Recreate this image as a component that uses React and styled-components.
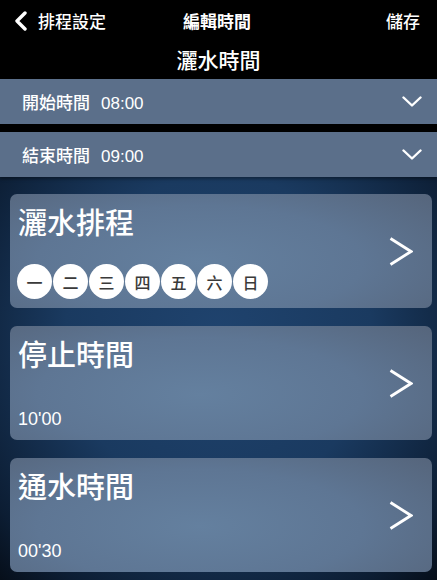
import React from 'react';
import styled, { createGlobalStyle } from 'styled-components';

const GlobalStyle = createGlobalStyle`
  html, body {
    margin: 0;
    padding: 0;
    background: #000;
  }
  body {
    font-family: 'Noto Sans CJK TC', 'Noto Sans', sans-serif;
    color: #fff;
  }
`;

const Screen = styled.div`
  width: 437px;
  height: 580px;
  display: flex;
  flex-direction: column;
  overflow: hidden;
  background: radial-gradient(ellipse 78% 62% at 50% 58%, #1f436e 0%, #1a3a60 45%, #0c1d33 80%, #03070d 100%);
`;

const Header = styled.header`
  background: #000;
  height: 80px;
  box-sizing: border-box;
  padding-top: 9px;
`;

const NavBar = styled.div`
  display: grid;
  grid-template-columns: 1fr auto 1fr;
  align-items: center;
  padding: 0 17px 0 14px;
  height: 24px;
  font-size: 17px;
  line-height: 24px;
`;

const BackButton = styled.div`
  display: flex;
  align-items: center;
  gap: 10px;
  font-weight: 500;
`;

const NavTitle = styled.div`
  font-weight: 700;
`;

const SaveButton = styled.div`
  justify-self: end;
  font-weight: 500;
`;

const PageTitle = styled.h1`
  margin: 12px 0 0;
  text-align: center;
  font-size: 21px;
  line-height: 28px;
  font-weight: 500;
`;

const TimeRows = styled.div`
  display: flex;
  flex-direction: column;
  gap: 8px;
  background: linear-gradient(#000 0%, #000 70%, rgba(0, 0, 0, 0) 100%);
`;

const TimeRow = styled.div`
  height: 45px;
  display: flex;
  align-items: center;
  justify-content: space-between;
  padding: 0 15px 0 22px;
  background: #5b6f8a;
  box-shadow: 0 2px 3px rgba(0, 0, 0, 0.35);
  font-size: 17px;
  font-weight: 500;
`;

const RowLabel = styled.span`
  display: flex;
  gap: 11px;
  align-items: baseline;
`;

const RowTime = styled.span`
  font-family: 'Liberation Sans', 'Noto Sans', sans-serif;
  font-size: 17px;
  font-weight: 400;
`;

const CardList = styled.div`
  display: flex;
  flex-direction: column;
  gap: 18px;
  padding: 17px 5px 8px 10px;
`;

const Card = styled.div`
  height: 114px;
  box-sizing: border-box;
  display: flex;
  align-items: center;
  justify-content: space-between;
  padding: 0 19px 0 8px;
  border-radius: 7px;
  background: radial-gradient(ellipse 70% 90% at 45% 60%, #64809f 0%, #5e7694 55%, #56667d 100%);
`;

const CardBody = styled.div`
  height: 100%;
  box-sizing: border-box;
  display: flex;
  flex-direction: column;
  justify-content: space-between;
  padding: ${p => (p.$days ? '12px 0 9px' : '12px 0 11px')};
`;

const CardTitle = styled.div`
  font-size: 29px;
  line-height: 31px;
  font-weight: 500;
`;

const CardValue = styled.div`
  font-family: 'Liberation Sans', 'Noto Sans', sans-serif;
  font-size: 18px;
  line-height: 20px;
`;

const Days = styled.div`
  display: flex;
  gap: 1px;
  margin-left: -1px;
`;

const Day = styled.span`
  width: 35px;
  height: 35px;
  border-radius: 50%;
  background: #fff;
  color: #3a3a3a;
  display: flex;
  align-items: center;
  justify-content: center;
  font-size: 16px;
  font-weight: 500;
`;

const BackIcon = () => (
  <svg width="14" height="20" viewBox="0 0 14 20">
    <polyline points="11,2 3,10 11,18" fill="none" stroke="#fff" strokeWidth="3.4" strokeLinecap="round" strokeLinejoin="round" />
  </svg>
);

const DownIcon = () => (
  <svg width="20" height="11" viewBox="0 0 20 11">
    <polyline points="1.5,1.5 10,9.5 18.5,1.5" fill="none" stroke="#fff" strokeWidth="2.4" strokeLinecap="round" strokeLinejoin="round" />
  </svg>
);

const NextIcon = () => (
  <svg width="24" height="29" viewBox="0 0 24 29">
    <polyline points="1.5,1.5 22,14.5 1.5,27.5" fill="none" stroke="#fff" strokeWidth="2.8" strokeLinejoin="miter" />
  </svg>
);

const days = ['一', '二', '三', '四', '五', '六', '日'];

const App = () => (
  <>
    <GlobalStyle />
    <Screen>
      <Header>
        <NavBar>
          <BackButton>
            <BackIcon />
            排程設定
          </BackButton>
          <NavTitle>編輯時間</NavTitle>
          <SaveButton>儲存</SaveButton>
        </NavBar>
        <PageTitle>灑水時間</PageTitle>
      </Header>

      <TimeRows>
        <TimeRow>
          <RowLabel>開始時間<RowTime>08:00</RowTime></RowLabel>
          <DownIcon />
        </TimeRow>
        <TimeRow>
          <RowLabel>結束時間<RowTime>09:00</RowTime></RowLabel>
          <DownIcon />
        </TimeRow>
      </TimeRows>

      <CardList>
        <Card>
          <CardBody $days>
            <CardTitle>灑水排程</CardTitle>
            <Days>
              {days.map(d => <Day key={d}>{d}</Day>)}
            </Days>
          </CardBody>
          <NextIcon />
        </Card>
        <Card>
          <CardBody>
            <CardTitle>停止時間</CardTitle>
            <CardValue>10'00</CardValue>
          </CardBody>
          <NextIcon />
        </Card>
        <Card>
          <CardBody>
            <CardTitle>通水時間</CardTitle>
            <CardValue>00'30</CardValue>
          </CardBody>
          <NextIcon />
        </Card>
      </CardList>
    </Screen>
  </>
);

export default App;
